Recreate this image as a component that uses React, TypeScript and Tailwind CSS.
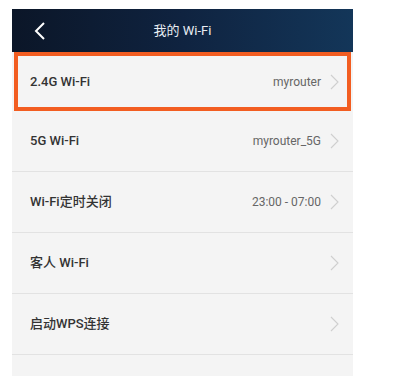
const ROWS = [
  { label: '5G Wi-Fi', value: 'myrouter_5G' },
  { label: 'Wi-Fi定时关闭', value: '23:00 - 07:00' },
  { label: '客人 Wi-Fi', value: '' },
  { label: '启动WPS连接', value: '' },
]

function Chevron() {
  return (
    <svg width="9" height="16" viewBox="0 0 9 16" className="ml-[9px] shrink-0">
      <polyline points="1,1 8,8 1,15" fill="none" stroke="#cfcfcf" strokeWidth="1.1" />
    </svg>
  )
}

export default function App() {
  return (
    <div
      className="w-[395px] h-[376px] bg-white overflow-hidden pt-[9px] pl-[12px]"
      style={{ fontFamily: "Roboto, 'Noto Sans CJK SC', sans-serif" }}
    >
      <div className="w-[341px] bg-[#f4f4f4]">
        {/* Header */}
        <div className="relative h-[43px] flex items-center justify-center bg-gradient-to-r from-[#0b1628] via-[#0f2340] to-[#133659]">
          <svg width="11" height="18" viewBox="0 0 11 18" className="absolute left-[22px] top-[13px]">
            <polyline points="10,1 2,9 10,17" fill="none" stroke="#ffffff" strokeWidth="2" />
          </svg>
          <span className="text-[13px] text-[#e8edf3]">我的 Wi-Fi</span>
        </div>

        {/* Highlighted row */}
        <div className="mx-[2px] h-[59px] border-[4px] border-[#f25d21] flex items-center pl-[12px] pr-[8px]">
          <span className="flex-1 text-[13px] font-medium text-[#333]">2.4G Wi-Fi</span>
          <span className="text-[12px] text-[#666]">myrouter</span>
          <Chevron />
        </div>

        {ROWS.map((r) => (
          <div
            key={r.label}
            className="h-[61px] flex items-center pl-[18px] pr-[14px] border-b border-[#e2e2e2]"
          >
            <span className="flex-1 text-[13px] font-medium text-[#333]">{r.label}</span>
            {r.value && <span className="text-[12px] text-[#666]">{r.value}</span>}
            <Chevron />
          </div>
        ))}
        <div className="h-[30px]" />
      </div>
    </div>
  )
}
